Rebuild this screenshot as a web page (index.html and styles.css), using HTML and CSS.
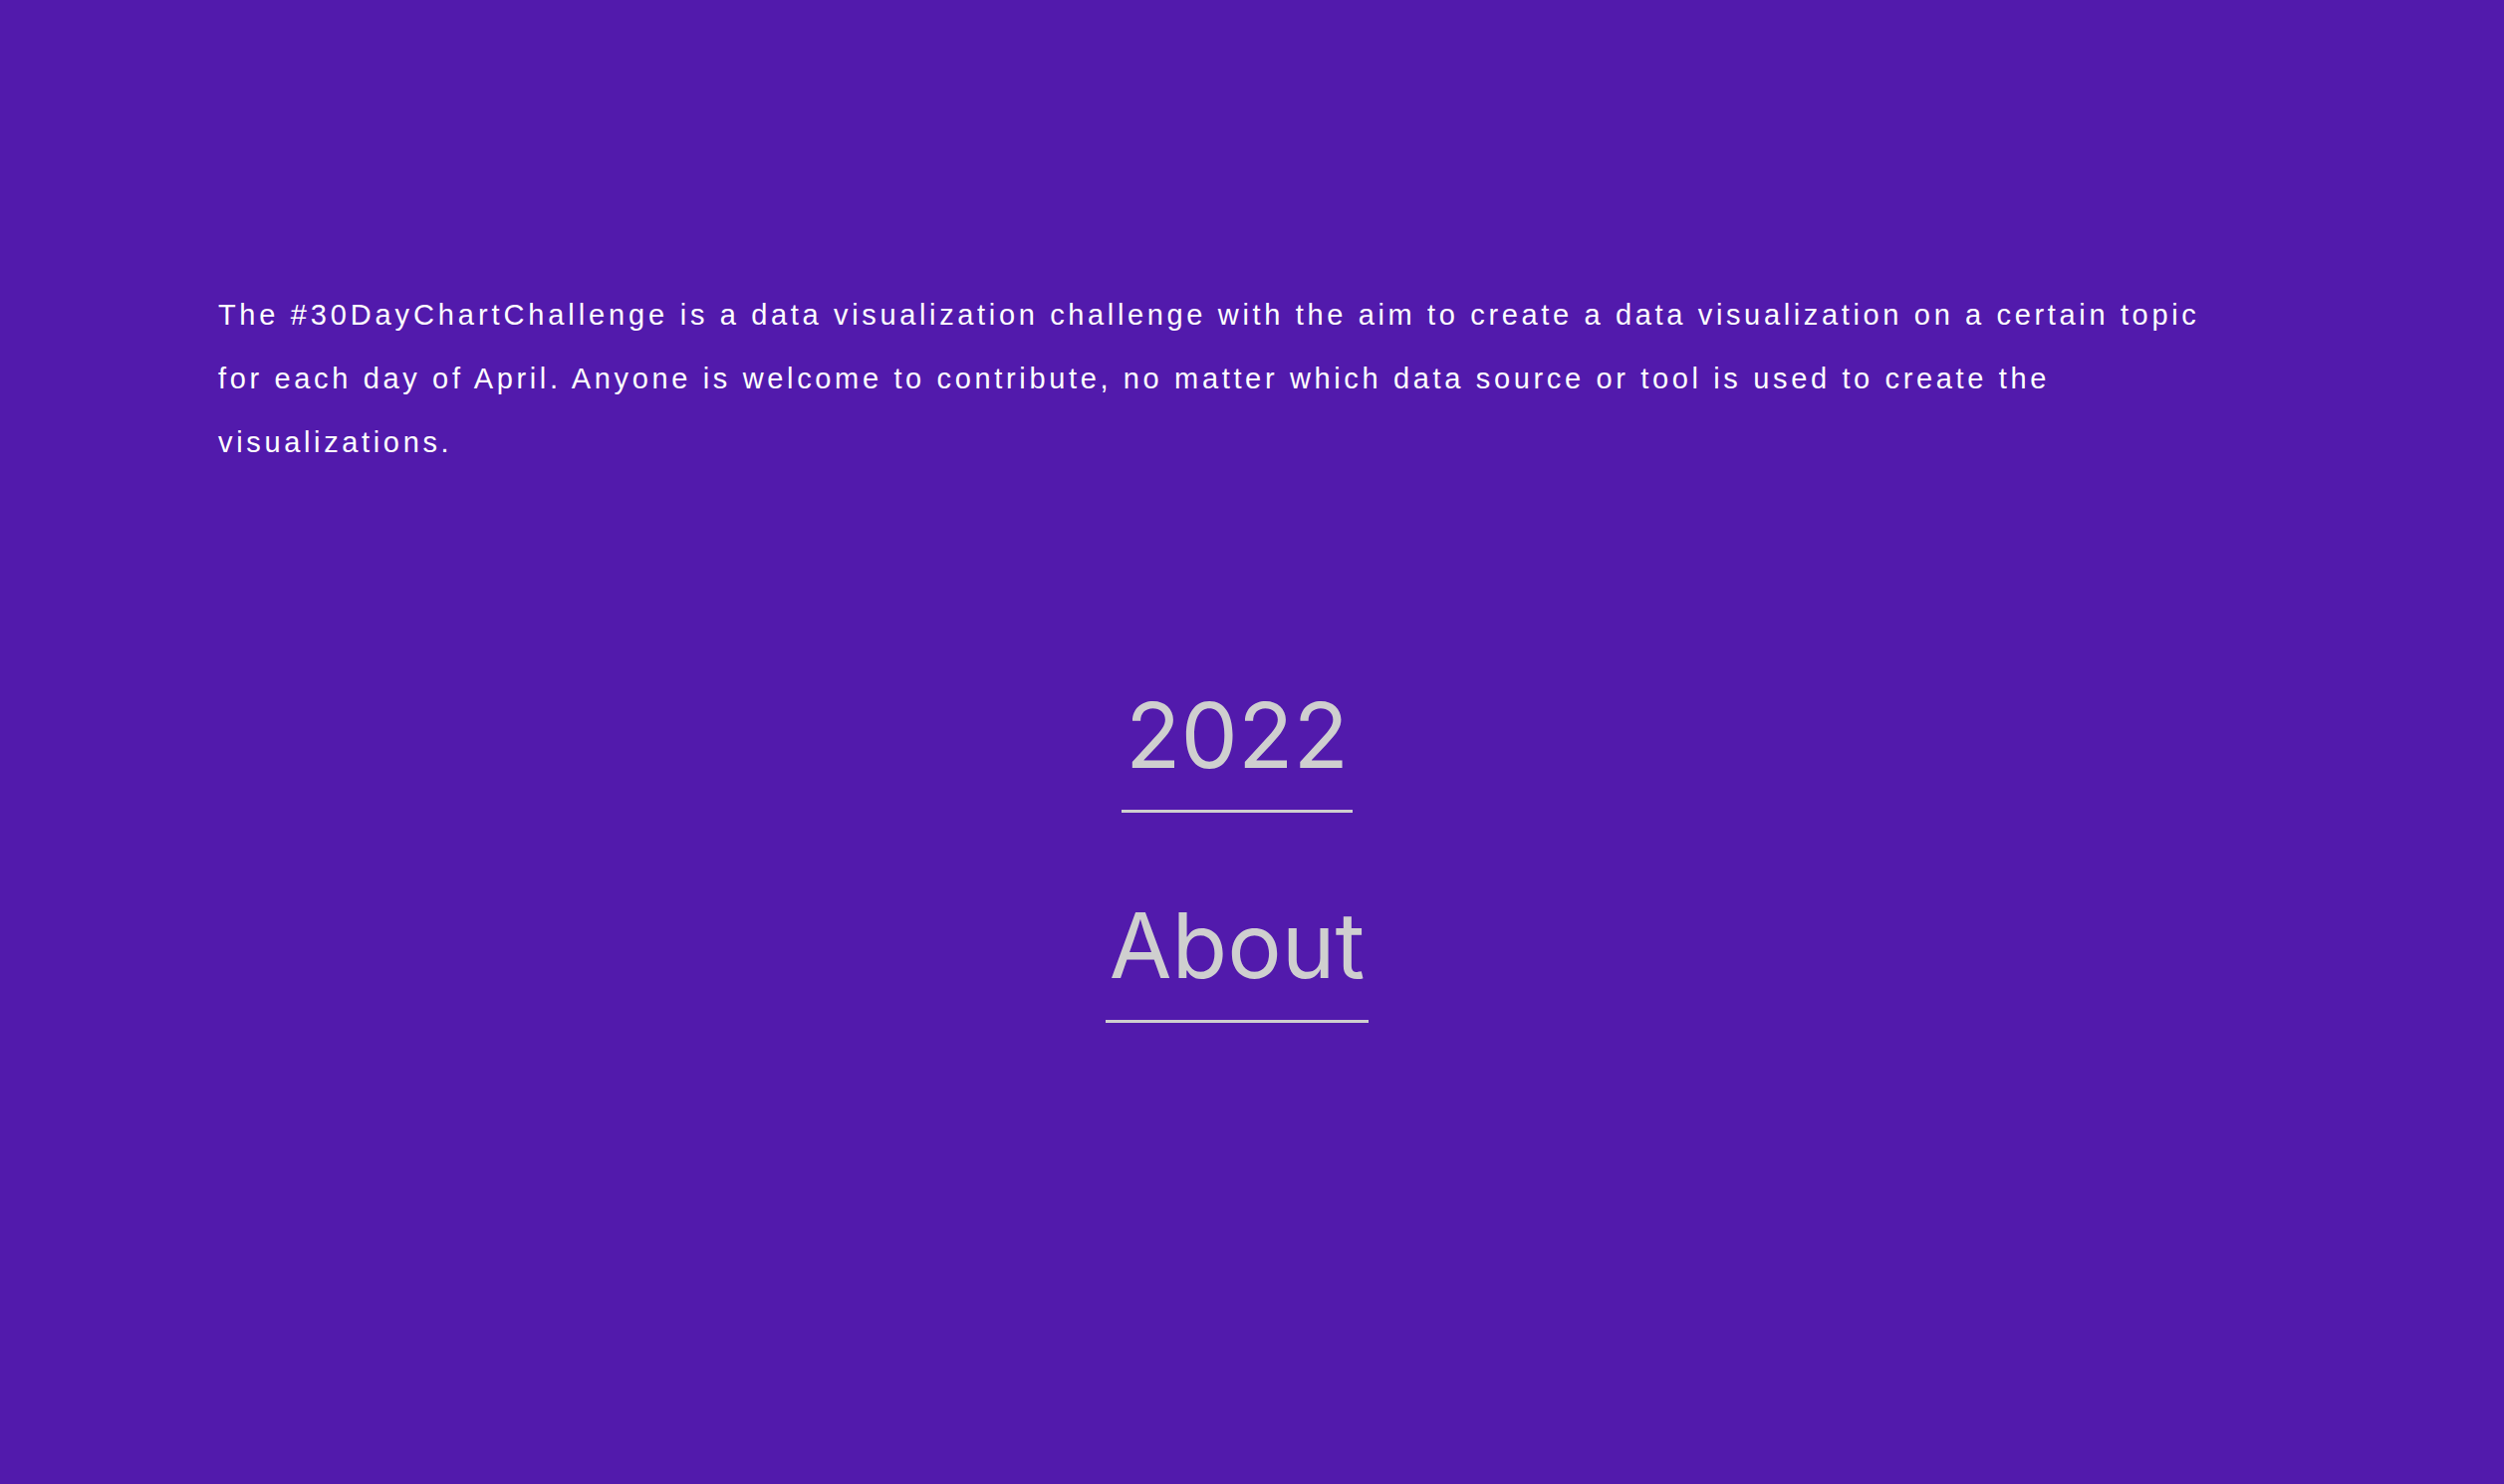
FILE: index.html
```html
<!DOCTYPE html>
<html lang="en">
<head>
<meta charset="utf-8">
<title>#30DayChartChallenge</title>
<link rel="stylesheet" href="styles.css">
</head>
<body>
<main class="page">
  <section class="intro">
    <p class="intro-text">The <a class="tag" href="#">#30DayChartChallenge</a> is a data visualization challenge with the aim to create a data visualization on a certain topic for each day of April. Anyone is welcome to contribute, no matter which data source or tool is used to create the visualizations.</p>
  </section>
  <nav class="links">
    <a class="nav-link" href="#">2022</a>
    <a class="nav-link" href="#">About</a>
  </nav>
</main>
</body>
</html>
```

FILE: styles.css
```css
html, body {
  margin: 0;
  padding: 0;
  background: #521aac;
}
body {
  min-height: 1490px;
  font-family: "Liberation Sans", Arial, sans-serif;
  color: #ffffff;
}
.page {
  display: flex;
  flex-direction: column;
  padding: 284px 0 0 219px;
}
.intro {
  width: 2010px;
}
.intro-text {
  margin: 0;
  font-size: 29px;
  line-height: 64px;
  letter-spacing: 3.65px;
}
.tag {
  color: #ffffff;
  text-decoration: none;
  letter-spacing: 3.9px;
}
.links {
  display: flex;
  flex-direction: column;
  align-items: center;
  gap: 79px;
  margin: 208px 249px 0 0;
}
.nav-link {
  font-family: Inter, "Liberation Sans", sans-serif;
  font-size: 91px;
  line-height: 1.2;
  color: #cfcfcf;
  text-decoration: none;
  border-bottom: 3px solid #cfcfcf;
  padding: 0 4px 20px;
}
```
